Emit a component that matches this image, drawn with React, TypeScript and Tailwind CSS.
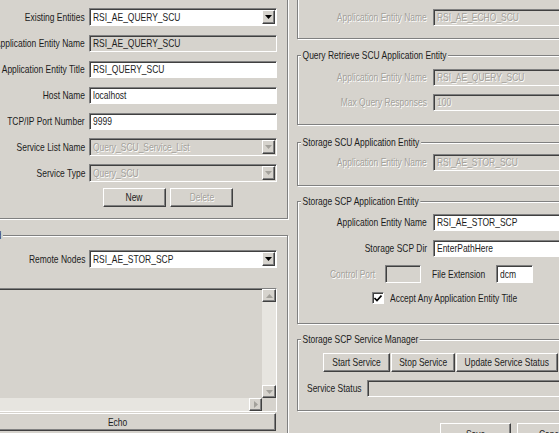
import React from 'react';

// classic win32 bevels
const sunken = 'border border-t-[#808080] border-l-[#808080] border-b-white border-r-white shadow-[inset_1px_1px_0_#404040]';
const raised = 'border border-t-white border-l-white border-b-[#404040] border-r-[#404040] shadow-[inset_-1px_-1px_0_#808080]';
const dimText = 'text-[#a3a19b] [text-shadow:1px_1px_0_#fff]';

// the capture is squeezed horizontally, so text is drawn condensed
const T: React.FC<{ children: React.ReactNode; o?: 'l' | 'r' | 'c' }> = ({ children, o = 'l' }) => (
  <span className={`inline-block whitespace-nowrap scale-x-[0.77] ${o === 'r' ? 'origin-right' : o === 'c' ? 'origin-center' : 'origin-left'}`}>
    {children}
  </span>
);

const Field: React.FC<{ value?: string; white?: boolean; dim?: boolean; className?: string }> = ({ value, white, dim, className }) => (
  <div className={`${sunken} h-[17px] flex items-center pl-[3px] whitespace-nowrap overflow-hidden ${white ? 'bg-white' : 'bg-[#d6d3cd]'} ${dim ? dimText : 'text-[#1c1c1c]'} ${className ?? ''}`}>
    {value && <T>{value}</T>}
  </div>
);

const Combo: React.FC<{ value: string; disabled?: boolean }> = ({ value, disabled }) => (
  <div className={`${sunken} h-[18px] flex items-center pl-[3px] pr-[1px] ${disabled ? `bg-[#d6d3cd] ${dimText}` : 'bg-white text-[#1c1c1c]'}`}>
    <span className="flex-1 whitespace-nowrap"><T>{value}</T></span>
    <div className={`${raised} w-[13px] h-[14px] bg-[#d6d3cd] flex items-center justify-center`}>
      <svg width="7" height="4" viewBox="0 0 7 4">
        <path d="M0 0h7L3.5 4z" fill={disabled ? '#a3a19b' : '#000'} />
      </svg>
    </div>
  </div>
);

const Btn: React.FC<{ label: string; disabled?: boolean; className?: string }> = ({ label, disabled, className }) => (
  <button className={`${raised} bg-[#d6d3cd] flex items-center justify-center whitespace-nowrap ${disabled ? dimText : 'text-[#1c1c1c]'} ${className ?? ''}`}>
    <T o="c">{label}</T>
  </button>
);

const Group: React.FC<{ title?: string; titlePos?: string; className?: string; children: React.ReactNode }> = ({ title, titlePos, className, children }) => (
  <div className={`relative border border-[#808080] shadow-[inset_1px_1px_0_#fff,1px_1px_0_#fff] ${className ?? ''}`}>
    {title && (
      <span className={`absolute top-[-7px] bg-[#d6d3cd] px-[2px] leading-[13px] whitespace-nowrap text-[#1c1c1c] scale-x-[0.77] ${titlePos ?? 'left-[3px] origin-left'}`}>
        {title}
      </span>
    )}
    {children}
  </div>
);

const LeftRow: React.FC<{ label: string; children: React.ReactNode }> = ({ label, children }) => (
  <div className="flex items-center gap-[4px] h-[18px]">
    <span className="w-[134px] shrink-0 text-right"><T o="r">{label}</T></span>
    <div className="flex-1">{children}</div>
  </div>
);

const RightRow: React.FC<{ label: string; dim?: boolean; children: React.ReactNode }> = ({ label, dim, children }) => (
  <div className="flex items-center gap-[6px]">
    <span className={`w-[129px] shrink-0 text-right ${dim ? dimText : ''}`}><T o="r">{label}</T></span>
    <div className="flex-1">{children}</div>
  </div>
);

const Arrow: React.FC<{ dir: 'up' | 'down' | 'right' }> = ({ dir }) => {
  const d = dir === 'up' ? 'M0 4h7L3.5 0z' : dir === 'down' ? 'M0 0h7L3.5 4z' : 'M0 0v7l4-3.5z';
  return (
    <svg width={dir === 'right' ? 4 : 7} height={dir === 'right' ? 7 : 4} viewBox={dir === 'right' ? '0 0 4 7' : '0 0 7 4'}>
      <path d={d} fill="#a3a19b" />
    </svg>
  );
};

export default function App() {
  return (
    <div className="w-[559px] h-[433px] overflow-hidden bg-[#d6d3cd] text-[#1c1c1c] text-[11px] leading-none font-['Liberation_Sans',Arial,sans-serif] flex">
      {/* left column */}
      <div className="-ml-[50px] w-[338px] shrink-0 flex flex-col -mt-[10px]">
        <Group title="Application Entities" className="pt-[17px] pb-[11px] pr-[10px] flex flex-col gap-[8px]">
          <LeftRow label="Existing Entities"><Combo value="RSI_AE_QUERY_SCU" /></LeftRow>
          <LeftRow label="Application Entity Name"><Field value="RSI_AE_QUERY_SCU" /></LeftRow>
          <LeftRow label="Application Entity Title"><Field white value="RSI_QUERY_SCU" /></LeftRow>
          <LeftRow label="Host Name"><Field white value="localhost" /></LeftRow>
          <LeftRow label="TCP/IP Port Number"><Field white value="9999" /></LeftRow>
          <LeftRow label="Service List Name"><Combo disabled value="Query_SCU_Service_List" /></LeftRow>
          <LeftRow label="Service Type"><Combo disabled value="Query_SCU" /></LeftRow>
          <div className="flex gap-[4px] ml-[152px] -mt-[2px]">
            <Btn label="New" className="w-[63px] h-[19px]" />
            <Btn label="Delete" disabled className="w-[63px] h-[19px]" />
          </div>
        </Group>

        <Group title="Echo Remote Node Command" titlePos="right-[calc(100%-52px)] origin-right" className="mt-[16px] pt-[14px] pb-[10px] pr-[10px] flex flex-col">
          <LeftRow label="Remote Nodes"><Combo value="RSI_AE_STOR_SCP" /></LeftRow>
          <div className={`${sunken} ml-[9px] mt-[20px] h-[124px] bg-[#d6d3cd] flex flex-col`}>
            <div className="flex-1 flex">
              <div className="flex-1" />
              <div className="w-[14px] flex flex-col bg-[#e7e5e0]">
                <div className={`${raised} h-[13px] bg-[#d6d3cd] flex items-center justify-center`}><Arrow dir="up" /></div>
                <div className="flex-1" />
                <div className={`${raised} h-[13px] bg-[#d6d3cd] flex items-center justify-center`}><Arrow dir="down" /></div>
              </div>
            </div>
            <div className="h-[13px] flex">
              <div className="flex-1 bg-[#e7e5e0]" />
              <div className={`${raised} w-[13px] bg-[#d6d3cd] flex items-center justify-center`}><Arrow dir="right" /></div>
              <div className="w-[14px] bg-[#d6d3cd]" />
            </div>
          </div>
          <Btn label="Echo" className="ml-[9px] mr-[1px] mt-[1px] h-[18px]" />
        </Group>
      </div>

      {/* right column */}
      <div className="ml-[9px] w-[290px] shrink-0 flex flex-col -mt-[12px]">
        <Group title="Echo SCU Application Entity" className="pt-[20px] pb-[12px] pr-[10px]">
          <RightRow label="Application Entity Name" dim><Field dim value="RSI_AE_ECHO_SCU" /></RightRow>
        </Group>

        <Group title="Query Retrieve SCU Application Entity" className="mt-[16px] pt-[13px] pb-[13px] pr-[10px] flex flex-col gap-[8px]">
          <RightRow label="Application Entity Name" dim><Field dim value="RSI_AE_QUERY_SCU" /></RightRow>
          <RightRow label="Max Query Responses" dim><Field dim value="100" /></RightRow>
        </Group>

        <Group title="Storage SCU Application Entity" className="mt-[17px] pt-[11px] pb-[14px] pr-[10px]">
          <RightRow label="Application Entity Name" dim><Field dim value="RSI_AE_STOR_SCU" /></RightRow>
        </Group>

        <Group title="Storage SCP Application Entity" className="mt-[15px] pt-[12px] pb-[19px] pr-[10px] flex flex-col">
          <RightRow label="Application Entity Name"><Field white value="RSI_AE_STOR_SCP" /></RightRow>
          <div className="mt-[9px]">
            <RightRow label="Storage SCP Dir"><Field white value="EnterPathHere" /></RightRow>
          </div>
          <div className="mt-[8px] h-[18px] flex items-center">
            <span className={`ml-[32px] w-[44px] shrink-0 ${dimText}`}><T>Control Port</T></span>
            <Field className="ml-[11px] w-[36px] h-[18px] shrink-0" />
            <span className="ml-[11px] w-[52px] shrink-0"><T>File Extension</T></span>
            <Field white value="dcm" className="ml-[12px] w-[37px] h-[18px] shrink-0" />
          </div>
          <div className="mt-[9px] h-[12px] flex items-center ml-[74px]">
            <div className={`${sunken} w-[12px] h-[12px] bg-white flex items-center justify-center`}>
              <svg width="8" height="7" viewBox="0 0 8 7">
                <path d="M0.5 3l2.5 2.5 4.5-5" stroke="#000" strokeWidth="1.6" fill="none" />
              </svg>
            </div>
            <span className="ml-[6px]"><T>Accept Any Application Entity Title</T></span>
          </div>
        </Group>

        <Group title="Storage SCP Service Manager" className="mt-[15px] pt-[13px] pb-[13px] pr-[10px] flex flex-col gap-[8px]">
          <div className="flex gap-[1px] ml-[25px]">
            <Btn label="Start Service" className="w-[67px] h-[19px]" />
            <Btn label="Stop Service" className="w-[64px] h-[19px]" />
            <Btn label="Update Service Status" className="w-[102px] h-[19px]" />
          </div>
          <div className="flex items-center ml-[9px]">
            <span className="w-[55px] shrink-0"><T>Service Status</T></span>
            <Field className="ml-[5px] flex-1" />
          </div>
        </Group>

        <div className="mt-[12px] flex ml-[143px]">
          <Btn label="Save" className="w-[79px] h-[22px]" />
          <Btn label="Cancel" className="ml-[6px] w-[79px] h-[22px]" />
        </div>
      </div>
    </div>
  );
}
